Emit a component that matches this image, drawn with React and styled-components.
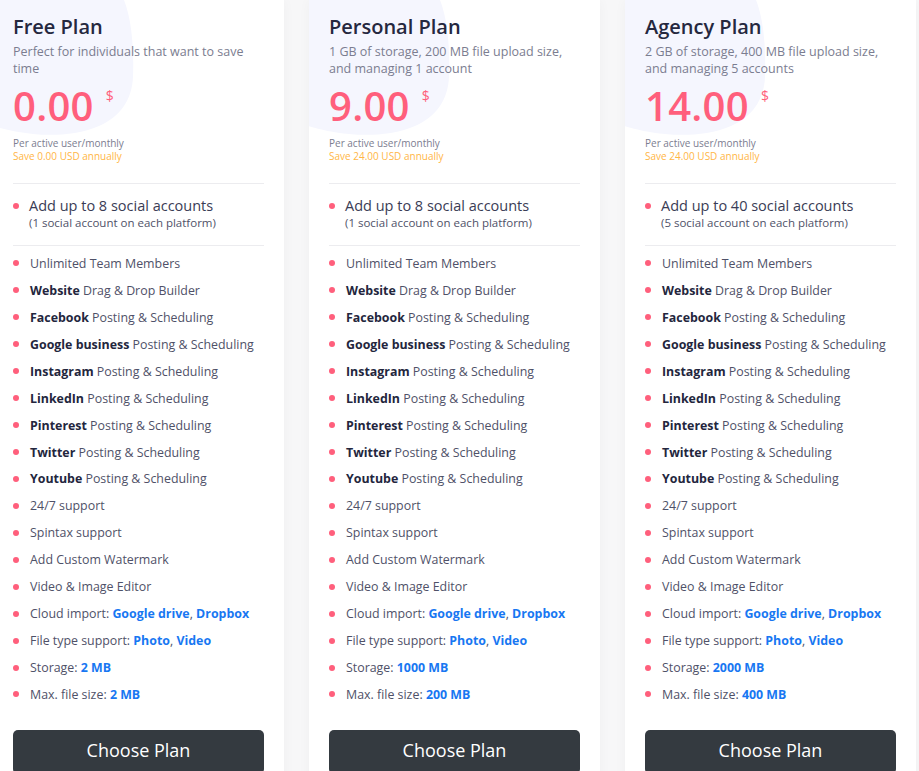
import React from "react";
import styled, { createGlobalStyle } from "styled-components";

const Global = createGlobalStyle`
  html, body { margin: 0; padding: 0; overflow: hidden; background: #f7f7f8; }
  body { font-family: "Open Sans", "Noto Sans", sans-serif; }
  * { box-sizing: border-box; }
`;

const Page = styled.div`
  display: grid;
  grid-template-columns: repeat(3, 291px);
  column-gap: 25px;
  margin-left: -7px;
  width: 940px;
  height: 771px;
  overflow: hidden;
`;

const Card = styled.section`
  position: relative;
  overflow: hidden;
  background: #ffffff;
  box-shadow: 0 0 12px rgba(20, 20, 60, 0.035);
  padding: 15px 20px 20px;
  height: 800px;
`;

const Blob = styled.svg`
  position: absolute;
  left: 0;
  top: 0;
  width: 160px;
  height: 150px;
  z-index: 0;
`;

const Content = styled.div`
  position: relative;
  z-index: 1;
  display: flex;
  flex-direction: column;
`;

const Title = styled.h2`
  margin: 0;
  font-size: 20px;
  line-height: 24px;
  font-weight: 600;
  color: #25283f;
`;

const Desc = styled.p`
  margin: 4px 0 0;
  font-size: 12.5px;
  line-height: 17px;
  color: #7b7d90;
  height: 34px;
`;

const PriceRow = styled.div`
  display: flex;
  align-items: flex-start;
  margin-top: 9px;
`;

const Price = styled.span`
  font-size: 40px;
  line-height: 40px;
  font-weight: 600;
  color: #ff5f7c;
  letter-spacing: 0.3px;
`;

const Currency = styled.span`
  font-size: 14px;
  line-height: 14px;
  color: #ff5f7c;
  margin: 3px 0 0 12px;
`;

const Small = styled.div`
  font-size: 10px;
  line-height: 13px;
  color: ${(p) => (p.$accent ? "#ffb646" : "#7b7d90")};
`;

const Meta = styled.div`
  margin-top: 11px;
`;

const Divider = styled.hr`
  border: 0;
  border-top: 1px solid #ececef;
  margin: ${(p) => p.$top}px 0 0;
  width: 100%;
`;

const Accounts = styled.div`
  display: flex;
  align-items: flex-start;
  gap: 10px;
  padding: 13px 0 15px;
`;

const Dot = styled.span`
  flex: 0 0 6px;
  width: 6px;
  height: 6px;
  border-radius: 50%;
  background: #ff5f7c;
  margin-top: ${(p) => p.$top}px;
`;

const AccountsText = styled.div`
  display: flex;
  flex-direction: column;
`;

const AccMain = styled.span`
  font-size: 14.5px;
  line-height: 18px;
  color: #3a3c55;
`;

const AccSub = styled.span`
  font-size: 11.5px;
  line-height: 15px;
  color: #4f5168;
`;

const Features = styled.ul`
  list-style: none;
  margin: 4px 0 0;
  padding: 0;
`;

const Feature = styled.li`
  display: flex;
  align-items: center;
  gap: 11px;
  height: 26.95px;
  font-size: 12.4px;
  color: #4f5168;
  white-space: nowrap;
`;

const Strong = styled.b`
  font-weight: 700;
  color: #23263d;
`;

const Link = styled.b`
  font-weight: 700;
  color: #1877f2;
`;

const Button = styled.button`
  margin-top: 22px;
  width: 100%;
  height: 44px;
  border: 0;
  border-radius: 5px;
  background: #343a40;
  color: #ffffff;
  font-family: "Open Sans", "Noto Sans", sans-serif;
  font-size: 18px;
  font-weight: 500;
  display: flex;
  align-items: center;
  justify-content: center;
  padding: 0 0 3px;
`;

const common = [
  [{ t: "Unlimited Team Members" }],
  [{ t: "Website", s: 1 }, { t: " Drag & Drop Builder" }],
  [{ t: "Facebook", s: 1 }, { t: " Posting & Scheduling" }],
  [{ t: "Google business", s: 1 }, { t: " Posting & Scheduling" }],
  [{ t: "Instagram", s: 1 }, { t: " Posting & Scheduling" }],
  [{ t: "LinkedIn", s: 1 }, { t: " Posting & Scheduling" }],
  [{ t: "Pinterest", s: 1 }, { t: " Posting & Scheduling" }],
  [{ t: "Twitter", s: 1 }, { t: " Posting & Scheduling" }],
  [{ t: "Youtube", s: 1 }, { t: " Posting & Scheduling" }],
  [{ t: "24/7 support" }],
  [{ t: "Spintax support" }],
  [{ t: "Add Custom Watermark" }],
  [{ t: "Video & Image Editor" }],
  [{ t: "Cloud import: " }, { t: "Google drive", l: 1 }, { t: ", " }, { t: "Dropbox", l: 1 }],
  [{ t: "File type support: " }, { t: "Photo", l: 1 }, { t: ", " }, { t: "Video", l: 1 }],
];

const plans = [
  {
    name: "Free Plan",
    desc: "Perfect for individuals that want to save time",
    price: "0.00",
    save: "Save 0.00 USD annually",
    acc: "Add up to 8 social accounts",
    sub: "(1 social account on each platform)",
    storage: "2 MB",
    file: "2 MB",
  },
  {
    name: "Personal Plan",
    desc: "1 GB of storage, 200 MB file upload size, and managing 1 account",
    price: "9.00",
    save: "Save 24.00 USD annually",
    acc: "Add up to 8 social accounts",
    sub: "(1 social account on each platform)",
    storage: "1000 MB",
    file: "200 MB",
  },
  {
    name: "Agency Plan",
    desc: "2 GB of storage, 400 MB file upload size, and managing 5 accounts",
    price: "14.00",
    save: "Save 24.00 USD annually",
    acc: "Add up to 40 social accounts",
    sub: "(5 social account on each platform)",
    storage: "2000 MB",
    file: "400 MB",
  },
];

function Segs({ segs }) {
  return segs.map((s, i) =>
    s.s ? <Strong key={i}>{s.t}</Strong> : s.l ? <Link key={i}>{s.t}</Link> : <React.Fragment key={i}>{s.t}</React.Fragment>
  );
}

function PlanCard({ p }) {
  const feats = [
    ...common,
    [{ t: "Storage: " }, { t: p.storage, l: 1 }],
    [{ t: "Max. file size: " }, { t: p.file, l: 1 }],
  ];
  return (
    <Card>
      <Blob viewBox="0 0 160 150" aria-hidden="true">
        <path
          d="M-10 -10 L131 -10 L131 0 C139 20 141 50 140 77 C139 100 127 117 106 126 C85 135 60 136 40 134 C20 132 5 128 -10 123 Z"
          fill="#f5f6fe"
        />
      </Blob>
      <Content>
        <Title>{p.name}</Title>
        <Desc>{p.desc}</Desc>
        <PriceRow>
          <Price>{p.price}</Price>
          <Currency>$</Currency>
        </PriceRow>
        <Meta>
          <Small>Per active user/monthly</Small>
          <Small $accent>{p.save}</Small>
        </Meta>
        <Divider $top={20} />
        <Accounts>
          <Dot $top={6} />
          <AccountsText>
            <AccMain>{p.acc}</AccMain>
            <AccSub>{p.sub}</AccSub>
          </AccountsText>
        </Accounts>
        <Divider $top={0} />
        <Features>
          {feats.map((f, i) => (
            <Feature key={i}>
              <Dot $top={0} />
              <span>
                <Segs segs={f} />
              </span>
            </Feature>
          ))}
        </Features>
        <Button>Choose Plan</Button>
      </Content>
    </Card>
  );
}

export default function App() {
  return (
    <>
      <Global />
      <Page>
        {plans.map((p) => (
          <PlanCard key={p.name} p={p} />
        ))}
      </Page>
    </>
  );
}
